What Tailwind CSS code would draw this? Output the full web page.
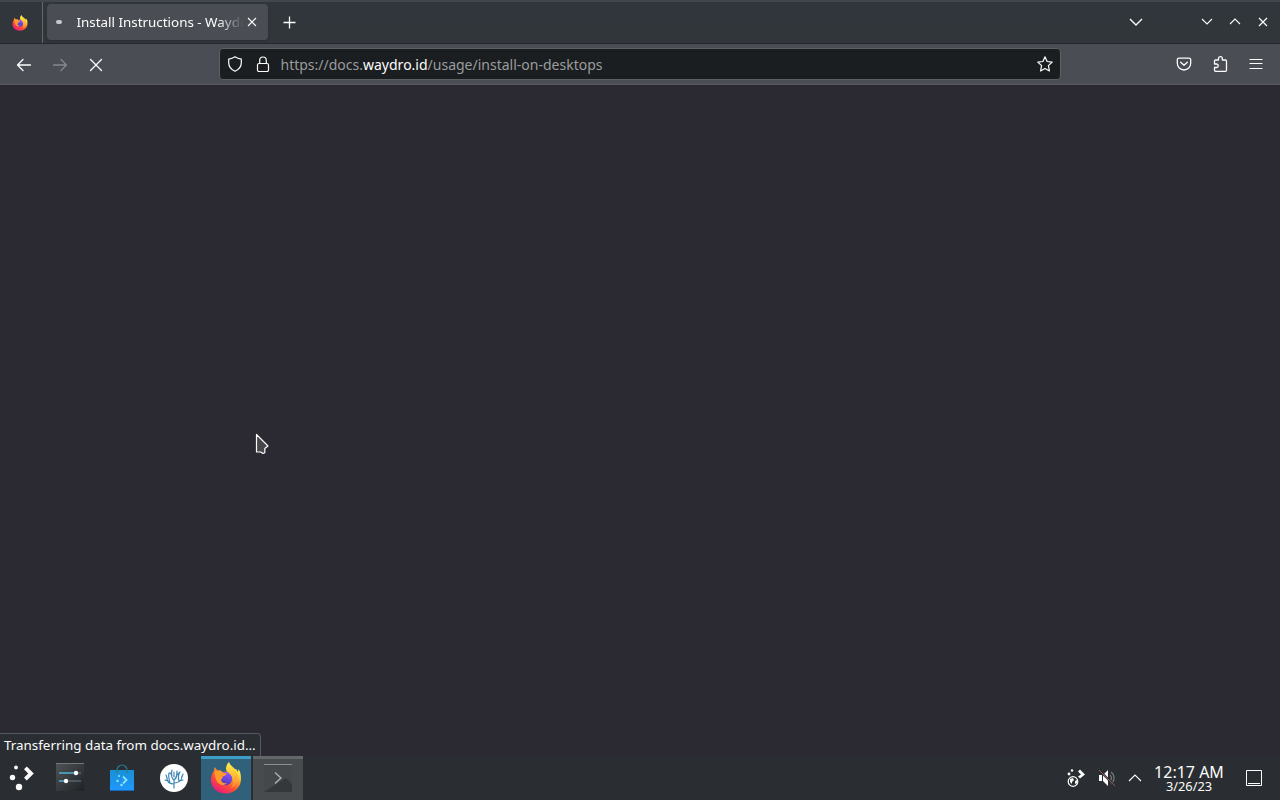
<!DOCTYPE html>
<html lang="en">
<head>
    <meta charset="UTF-8">
    <meta name="viewport" content="width=device-width, initial-scale=1.0">
    <title>Install Instructions - Waydroid</title>
    <script src="https://cdn.jsdelivr.net/npm/@tailwindcss/browser@4"></script>
</head>
<body class="w-[1280px] h-[800px] overflow-hidden bg-[#2b2a33] text-[#fcfcfc] font-['Noto_Sans',sans-serif] flex flex-col">

    <!-- Shared Firefox logo (not display:none, the gradients would be lost) -->
    <svg class="absolute w-0 h-0">
        <defs>
            <linearGradient id="flame" x1="0.85" y1="0.1" x2="0.2" y2="0.95">
                <stop offset="0" stop-color="#fff44f"/>
                <stop offset="0.3" stop-color="#ffa02e"/>
                <stop offset="0.6" stop-color="#ff5036"/>
                <stop offset="1" stop-color="#e8197d"/>
            </linearGradient>
            <linearGradient id="tail" x1="0" y1="0" x2="0" y2="1">
                <stop offset="0" stop-color="#fff04a"/>
                <stop offset="0.5" stop-color="#ffc033"/>
                <stop offset="1" stop-color="#ff8030"/>
            </linearGradient>
            <linearGradient id="globe" x1="0.7" y1="0" x2="0.3" y2="1">
                <stop offset="0" stop-color="#9059ff"/>
                <stop offset="1" stop-color="#4a36b8"/>
            </linearGradient>
            <symbol id="firefox" viewBox="0 0 32 32">
                <path fill="url(#flame)" d="M1 18c0-4 1-7 3-9l.5-4 3 3.500c2-.5 4 0 5 1.500L20 9l6-2 2 3 .5-3c2 3 2.500 6 2.500 10 0 8-6.500 14.500-15 14.500S1 26 1 18z"/>
                <circle cx="15.500" cy="16.500" r="6.800" fill="url(#globe)"/>
                <path fill="#ff9a2b" d="M4.500 9.500c3-1.500 6-1 8 1l4.500 1c-1 2-3 2-4 3s0 2-2 3c0 3 3 4.500 6 3.500-2 3-8 2.500-10-1.500-1.500-3-2.500-6-2.500-10z"/>
                <path fill="url(#tail)" d="M19 0c1 3 3 4 5 6 4 4 5 9 3 14-1 3-3 5-6 6 3-4 3-10-1-14-2-2-4-3-4-5 0-3 1-5 3-7z"/>
            </symbol>
        </defs>
    </svg>

    <!-- Tab bar -->
    <header class="h-[43px] shrink-0 flex items-center border-t-2 border-[#41474b] bg-linear-to-b from-[#30363b] to-[#31363b]">
        <div class="w-[43px] h-full flex items-center pl-3 border-r border-[#63676b]">
            <svg class="w-4 h-4"><use href="#firefox"/></svg>
        </div>
        <div class="ml-1 mb-0.5 w-[221px] h-9 rounded-[4px] bg-[#4a4d54] shadow-sm flex items-center">
            <span class="ml-[9px] w-[6px] h-[4px] rounded-full bg-[#c5c8cb]"></span>
            <span class="ml-[14.500px] w-[166px] overflow-hidden whitespace-nowrap text-[13.400px] leading-5 mask-r-from-85% mask-r-to-100%">Install Instructions - Waydroid</span>
            <svg class="ml-[4.500px] w-[10px] h-[10px]" viewBox="0 0 10 10" fill="none" stroke="#fcfcfc" stroke-width="1.1"><path d="M1 1l8 8M9 1l-8 8"/></svg>
        </div>
        <svg class="ml-[15px] w-[13px] h-[13px]" viewBox="0 0 13 13" fill="none" stroke="#fcfcfc" stroke-width="1.3"><path d="M6.5.5v12M.5 6.5h12"/></svg>
        <div class="ml-auto mb-0.5 flex items-center">
            <svg class="w-[14px] h-[8px] mr-[58px]" viewBox="0 0 14 8" fill="none" stroke="#fcfcfc" stroke-width="1.4"><path d="M1 1l6 6 6-6"/></svg>
            <svg class="w-3 h-[7px] mr-4" viewBox="0 0 12 7" fill="none" stroke="#fcfcfc" stroke-width="1.1"><path d="M1 1l5 5 5-5"/></svg>
            <svg class="w-3 h-[7px] mr-[17px]" viewBox="0 0 12 7" fill="none" stroke="#fcfcfc" stroke-width="1.1"><path d="M1 6l5-5 5 5"/></svg>
            <svg class="w-[10px] h-[10px] mr-3" viewBox="0 0 10 10" fill="none" stroke="#fcfcfc" stroke-width="1.2"><path d="M1 1l8 8M9 1l-8 8"/></svg>
        </div>
    </header>

    <!-- Navigation toolbar -->
    <nav class="h-[42px] shrink-0 flex items-center border-t border-t-[#24282c] border-b border-b-[#5a5d62] bg-[#4a4d54] pl-[6px] pr-[6px]">
        <div class="w-9 pt-px flex justify-center"><svg class="w-4 h-4" viewBox="0 0 16 16" fill="none" stroke="#fcfcfc" stroke-width="1.3" stroke-linecap="round" stroke-linejoin="round"><path d="M7 2.5L1.5 8 7 13.500M1.500 8h13"/></svg></div>
        <div class="w-9 pt-px flex justify-center"><svg class="w-4 h-4" viewBox="0 0 16 16" fill="none" stroke="#85878b" stroke-width="1.3" stroke-linecap="round" stroke-linejoin="round"><path d="M9 2.500l5.500 5.500L9 13.500M14.500 8h-13"/></svg></div>
        <div class="w-9 pt-px flex justify-center"><svg class="w-4 h-4" viewBox="0 0 16 16" fill="none" stroke="#fcfcfc" stroke-width="1.300" stroke-linecap="round"><path d="M2.500 2.500l11 11M13.500 2.500l-11 11"/></svg></div>

        <div class="ml-[105px] w-[842px] h-8 rounded-[4px] border border-[#5d6064] bg-[#1b1e20] flex items-center pl-[7px] pr-[7px]">
            <svg class="w-4 h-4" viewBox="0 0 16 16" fill="none" stroke="#fcfcfc" stroke-width="1.200" stroke-linejoin="round"><path d="M8 .8c2 1.400 4 2 6.300 2.300v3.700c0 3.800-2.500 6.800-6.300 8.500-3.800-1.700-6.300-4.700-6.300-8.500V3.100C4 2.800 6 2.200 8 .8z"/></svg>
            <svg class="ml-3 w-4 h-4" viewBox="0 0 16 16" fill="none" stroke="#fcfcfc" stroke-width="1.200"><rect x="2.500" y="7.500" width="11" height="8" rx="1.500"/><path d="M4.700 7.500V4.300a3.300 3.300 0 0 1 6.600 0v3.200"/></svg>
            <span class="ml-[9.500px] pt-0.5 text-[14px] leading-5 text-[#9a9c9e] whitespace-nowrap">https://docs.<span class="text-[#fcfcfc]">waydro.id</span>/usage/install-on-desktops</span>
            <svg class="ml-auto w-4 h-4" viewBox="0 0 16 16" fill="none" stroke="#fcfcfc" stroke-width="1.200" stroke-linejoin="round"><path d="M8 .8l2.100 4.700 5.100.6-3.800 3.500 1 5.300L8 12.400l-4.400 2.500 1-5.300L.8 6.100l5.100-.6z"/></svg>
        </div>

        <div class="ml-auto flex">
            <div class="w-9 flex justify-center"><svg class="w-4 h-4" viewBox="0 0 16 16" fill="none" stroke="#fcfcfc" stroke-width="1.300" stroke-linecap="round" stroke-linejoin="round"><path d="M3 2.200h10c1 0 1.700.6 1.700 1.600v3.500a6.700 6.700 0 0 1-13.400 0V3.800c0-1 .7-1.600 1.700-1.600zM4.700 6.300L8 9.300l3.300-3"/></svg></div>
            <div class="w-9 flex justify-center"><svg class="w-4 h-4" viewBox="0 0 16 16" fill="none" stroke="#fcfcfc" stroke-width="1.300" stroke-linejoin="round"><path d="M2.500 8V5c0-.6.400-1 1-1h3V2.600a1.900 1.900 0 0 1 3.800 0V4h3.200c.6 0 1 .4 1 1v9.300c0 .6-.4 1-1 1h-10c-.6 0-1-.4-1-1v-2.800h2a1.750 1.750 0 0 0 0-3.500z"/></svg></div>
            <div class="w-9 flex justify-center"><svg class="w-4 h-4" viewBox="0 0 16 16" fill="none" stroke="#fcfcfc" stroke-width="1.200" stroke-linecap="round"><path d="M2 3.500h12M2 7.500h12M2 12.500h12"/></svg></div>
        </div>
    </nav>

    <!-- Page area, still loading -->
    <main class="relative flex-1 flex items-end border-t border-[#25262b]">
        <div class="h-[23px] w-[261px] rounded-tr-[4px] border-t border-r border-[#55585c] bg-[#2a2e32] pl-1 text-[13.400px] leading-[23px] whitespace-nowrap">Transferring data from docs.waydro.id…</div>
        <svg class="absolute left-[255px] top-[347px] w-[15px] h-[22px]" viewBox="0 0 15 22"><path d="M1.500 1.500v17.500h4.200l2.300 1.500 1.800-.8v-4.200l3.200-2.500z" fill="#48484a" stroke="#fcfcfc" stroke-width="1.200" stroke-linejoin="round"/></svg>
    </main>

    <!-- Plasma panel -->
    <footer class="h-11 shrink-0 flex items-center bg-[#2a2e32]">
        <svg class="ml-[9px] w-[25px] h-[26px]" viewBox="0 0 25 26" fill="#fcfcfc"><circle cx="7" cy="2.500" r="1.900"/><circle cx="3.500" cy="12.500" r="2.700"/><circle cx="10" cy="22" r="3.200"/><path d="M15 4.300L17.800 1.500l7 7-7 7-2.800-2.800L19.200 8.500z"/></svg>
        <svg class="ml-[22px] mb-0.5 w-7 h-7" viewBox="0 0 28 28">
            <defs><linearGradient id="tile" x1="0" y1="0" x2="1" y2="1"><stop offset="0" stop-color="#505356"/><stop offset="1" stop-color="#1f2326"/></linearGradient></defs>
            <path fill="url(#tile)" d="M0 0h28v28H0z"/><path fill="#75787a" d="M0 0h28v1H0z"/>
            <path stroke="#56666f" stroke-width="1.500" d="M17 10h8M10 18h15"/><path stroke="#4fb1d2" stroke-width="1.500" d="M3 10h17M3 18h8"/>
            <circle cx="20" cy="10" r="2.200" fill="#fff"/><circle cx="10" cy="18" r="2.200" fill="#fff"/>
        </svg>
        <svg class="ml-[26px] w-6 h-7" viewBox="0 0 24 28">
            <defs><linearGradient id="bag" x1="0" y1="0" x2="0" y2="1"><stop offset="0" stop-color="#1890d5"/><stop offset="1" stop-color="#2098ff"/></linearGradient></defs>
            <path fill="url(#bag)" d="M0 6h24v21H0z"/><path d="M0 26h24v1H0z" fill="#176ab6"/>
            <path d="M7 9V6a5 5 0 0 1 10 0v3" fill="none" stroke="#277c91" stroke-width="1.200"/>
            <g fill="#8ce0ff"><circle cx="9" cy="12" r="1"/><circle cx="7.500" cy="17" r="1.200"/><circle cx="11.500" cy="21" r="1.300"/></g>
            <path d="M13 12.500l3.500 3.500-3.500 3.500" fill="none" stroke="#8ce0ff" stroke-width="1.800"/>
        </svg>
        <svg class="ml-[26px] w-7 h-[30px]" viewBox="0 0 28 30">
            <circle cx="14" cy="15" r="14" fill="#fff"/>
            <g fill="none" stroke="#3d86b6" stroke-width="1.200" stroke-linecap="round"><path d="M14 25v-8M14 21c-4 0-7-2-7-6M14 20c4 0 8-2 8-7M14 17c-3-2-3-6-2-10M14 17c3-2 3-5 3-9M7 15l-1-3M8 18l-3-1M10 20c-1-4-2-7-1-10M22 14l1-3M19 18l4-1M19 18c-1-3-1-6 1-9M12 12l-2-2M17 12l2-2M14 14V9"/></g>
        </svg>
        <div class="ml-[13px] w-[50px] h-11 border-t-[3px] border-[#3d9ec9] bg-[#31617a] flex items-center justify-center pb-[3px]">
            <svg class="w-8 h-8"><use href="#firefox"/></svg>
        </div>
        <div class="ml-0.5 w-[50px] h-11 border-t-[3px] border-[#63676a] bg-[#474b4e] flex items-center justify-center pb-[3px]">
            <svg class="w-7 h-7" viewBox="0 0 28 28"><path fill="#44484b" d="M0 0h28v28H0z"/><path fill="#34383b" d="M0 28L22 14l6 6v8z"/><path fill="#8b8e90" d="M0 0h28v1H0z"/><path d="M11 8.500l6 5.500-6 5.500" fill="none" stroke="#b3b5b6" stroke-width="1.300"/></svg>
        </div>

        <!-- System tray -->
        <div class="ml-auto flex items-center">
            <svg class="w-[18px] h-[18px]" viewBox="0 0 18 18" fill="#fcfcfc"><circle cx="5" cy="1.500" r="1.200"/><circle cx="2" cy="5" r="1.400"/><path d="M11 2.500l2-2 5 5-5 4-2-2 3-2z"/><circle cx="6" cy="12.500" r="4.800" fill="none" stroke="#fcfcfc" stroke-width="1.200"/><path d="M3 10l3-1 1 2-2 2v2l-2-2zM8 12l2-1v3l-2 1z"/></svg>
            <svg class="ml-[13px] w-[18px] h-[18px]" viewBox="0 0 18 18"><path fill="#fcfcfc" d="M1 6h3v6H1zM5 6l5-5v16l-5-5z"/><path d="M12 6c2 2 2 4 0 6M13 3c4 3 4 9 0 12" fill="none" stroke="#76797b" stroke-width="1.200"/><path d="M1 1l16 16" stroke="#2a2e32" stroke-width="2.200"/><path d="M1 1l16 16" stroke="#a8605f" stroke-width=".9"/></svg>
            <svg class="ml-3 w-[14px] h-2" viewBox="0 0 14 8" fill="none" stroke="#fcfcfc" stroke-width="1.100"><path d="M1 7l6-6 6 6"/></svg>
            <div class="ml-[9px] w-[76px] pt-0.5 flex flex-col items-center whitespace-nowrap">
                <span class="text-[16px] leading-[15px]">12:17 AM</span>
                <span class="text-[12.800px] leading-[13px]">3/26/23</span>
            </div>
            <svg class="ml-[19px] mr-[18px] w-4 h-4" viewBox="0 0 16 16" fill="none" stroke="#fcfcfc"><path d="M.5.5h15v15H.5zM2 13.500h12"/></svg>
        </div>
    </footer>
</body>
</html>
